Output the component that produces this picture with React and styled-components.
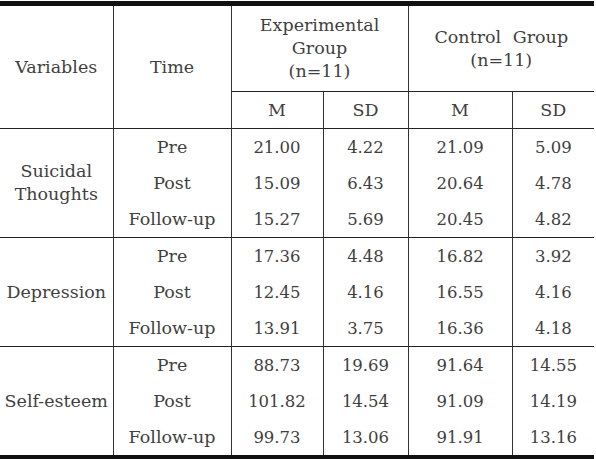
import React from "react";
import styled, { createGlobalStyle } from "styled-components";

const GlobalStyle = createGlobalStyle`
	html, body {
		margin: 0;
		padding: 0;
		background: #fff;
	}
`;

const Table = styled.table`
	margin-top: 1px;
	width: 594px;
	border-collapse: collapse;
	table-layout: fixed;
	font-family: "DejaVu Serif", "Liberation Serif", serif;
	font-size: 17.5px;
	color: #3f3f3f;
	border-top: 5px solid #111;
	border-bottom: 5px solid #111;
`;

const Col = styled.col`
	width: ${(p) => p.w}px;
`;

const Cell = styled.td`
	text-align: center;
	vertical-align: middle;
	padding: 0;
	height: 36px;
	line-height: 23px;
	white-space: pre-line;
	border-left: ${(p) => (p.$first ? "none" : "1px solid #333")};
	border-top: ${(p) => (p.$noTop ? "none" : "1px solid #222")};
`;

const NumCell = styled(Cell)`
	font-size: 16.5px;
`;

const HeadCell = styled.th`
	font-weight: 400;
	text-align: center;
	vertical-align: middle;
	padding: 0;
	height: ${(p) => p.$h || 36}px;
	line-height: 23px;
	white-space: pre-line;
	word-spacing: ${(p) => (p.$spaced ? "6px" : "0")};
	border-left: ${(p) => (p.$first ? "none" : "1px solid #333")};
	border-top: ${(p) => (p.$top ? "1px solid #222" : "none")};
`;

const widths = [113, 118, 92, 85, 104, 82];

const data = [
	{
		name: "Suicidal\nThoughts",
		rows: [
			["Pre", "21.00", "4.22", "21.09", "5.09"],
			["Post", "15.09", "6.43", "20.64", "4.78"],
			["Follow-up", "15.27", "5.69", "20.45", "4.82"],
		],
	},
	{
		name: "Depression",
		rows: [
			["Pre", "17.36", "4.48", "16.82", "3.92"],
			["Post", "12.45", "4.16", "16.55", "4.16"],
			["Follow-up", "13.91", "3.75", "16.36", "4.18"],
		],
	},
	{
		name: "Self-esteem",
		rows: [
			["Pre", "88.73", "19.69", "91.64", "14.55"],
			["Post", "101.82", "14.54", "91.09", "14.19"],
			["Follow-up", "99.73", "13.06", "91.91", "13.16"],
		],
	},
];

const App = () => {
	return (
		<>
			<GlobalStyle />
			<Table>
				<colgroup>
					{widths.map((w, i) => (
						<Col key={i} w={w} />
					))}
				</colgroup>
				<thead>
					<tr>
						<HeadCell rowSpan={2} $first>Variables</HeadCell>
						<HeadCell rowSpan={2}>Time</HeadCell>
						<HeadCell colSpan={2} $h={85}>
							{"Experimental\nGroup\n(n=11)"}
						</HeadCell>
						<HeadCell colSpan={2} $h={85} $spaced>
							{"Control Group\n(n=11)"}
						</HeadCell>
					</tr>
					<tr>
						{["M", "SD", "M", "SD"].map((t, i) => (
							<HeadCell key={i} $top>{t}</HeadCell>
						))}
					</tr>
				</thead>
				<tbody>
					{data.map((group) =>
						group.rows.map((row, i) => (
							<tr key={group.name + row[0]}>
								{i === 0 && (
									<Cell rowSpan={3} $first>
										{group.name}
									</Cell>
								)}
								<Cell $noTop={i !== 0}>{row[0]}</Cell>
								{row.slice(1).map((v, j) => (
									<NumCell key={j} $noTop={i !== 0}>
										{v}
									</NumCell>
								))}
							</tr>
						))
					)}
				</tbody>
			</Table>
		</>
	);
};

export default App;
